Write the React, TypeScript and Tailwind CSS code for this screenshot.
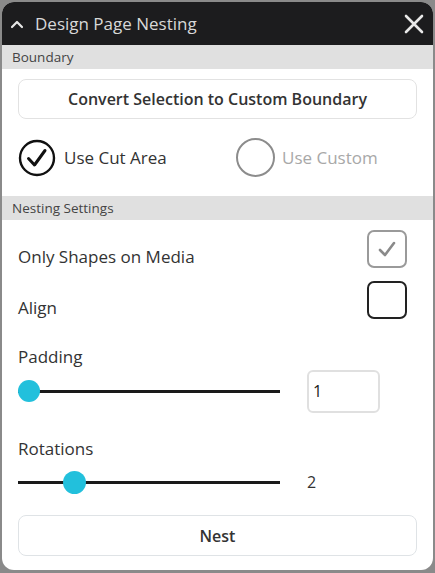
export default function App() {
  return (
    <div className="w-[435px] h-[573px] bg-[#8a8a8a] p-[2px] font-['Open_Sans',sans-serif]">
      <div className="w-full h-[568px] bg-white rounded-[12px] overflow-hidden flex flex-col">
        {/* Header */}
        <div className="h-[43px] bg-[#1c1c1e] flex items-center pl-[7px] pr-[9px] shrink-0">
          <svg width="16" height="16" viewBox="0 0 16 16" className="mr-[10px]">
            <path d="M3 11 L8 6 L13 11" fill="none" stroke="#e6e6e6" strokeWidth="2.2" strokeLinecap="round" strokeLinejoin="round" />
          </svg>
          <span className="text-[#d8d8d8] text-[17px] flex-1">Design Page Nesting</span>
          <svg width="20" height="20" viewBox="0 0 20 20">
            <path d="M2 2 L18 18 M18 2 L2 18" stroke="#e8e8e8" strokeWidth="2.6" strokeLinecap="round" />
          </svg>
        </div>

        {/* Boundary */}
        <div className="h-[24px] bg-[#e0e0e0] flex items-center px-[10px] text-[13.5px] text-[#444] shrink-0">Boundary</div>
        <div className="px-[16px] pt-[10px]">
          <button className="w-full h-[40px] rounded-[8px] border border-[#e2e2e2] text-[16px] font-semibold text-[#333]">
            Convert Selection to Custom Boundary
          </button>
          <div className="flex items-center h-[77px]">
            <div className="flex items-center w-[218px]">
              <svg width="38" height="38" viewBox="0 0 38 38">
                <circle cx="19" cy="19" r="17" fill="none" stroke="#111" strokeWidth="2.4" />
                <path d="M10.5 19.5 L16.5 26 L27 11.5" fill="none" stroke="#111" strokeWidth="3" strokeLinecap="round" strokeLinejoin="round" />
              </svg>
              <span className="ml-[8px] text-[17px] text-[#333]">Use Cut Area</span>
            </div>
            <div className="flex items-center">
              <svg width="39" height="39" viewBox="0 0 39 39">
                <circle cx="19.5" cy="19.5" r="18.5" fill="none" stroke="#8c8c8c" strokeWidth="2" />
              </svg>
              <span className="ml-[7px] text-[17px] text-[#a8a8a8]">Use Custom</span>
            </div>
          </div>
        </div>

        {/* Nesting Settings */}
        <div className="h-[24px] bg-[#e0e0e0] flex items-center px-[10px] text-[13.5px] text-[#444] shrink-0">Nesting Settings</div>
        <div className="px-[16px] pt-[10px]">
          <div className="flex items-start justify-between pr-[10px]">
            <span className="mt-[14px] text-[17px] leading-[25px] text-[#333]">Only Shapes on Media</span>
            <div className="w-[40px] h-[38px] rounded-[7px] border-2 border-[#9a9a9a] flex items-center justify-center">
              <svg width="24" height="24" viewBox="0 0 24 24">
                <path d="M5 13 L10 18 L19 6" fill="none" stroke="#8a8a8a" strokeWidth="2.6" strokeLinecap="round" strokeLinejoin="round" />
              </svg>
            </div>
          </div>
          <div className="flex items-start justify-between mt-[12px] pr-[10px]">
            <span className="mt-[14px] text-[17px] leading-[25px] text-[#333]">Align</span>
            <div className="w-[40px] h-[38px] rounded-[7px] border-2 border-[#222]" />
          </div>

          <div className="mt-[24px] text-[17px] leading-[25px] text-[#333]">Padding</div>
          <div className="flex items-center h-[44px]">
            <div className="relative w-[262px] h-[3px] bg-[#1a1a1a]">
              <div className="absolute left-0 top-[-10px] w-[22px] h-[22px] rounded-full bg-[#22c0dc]" />
            </div>
            <div className="ml-[27px] w-[73px] h-[43px] rounded-[6px] border-2 border-[#e0e0e0] flex items-center px-[4px] text-[16px] text-[#222]">1</div>
          </div>

          <div className="mt-[23px] text-[17px] leading-[25px] text-[#333]">Rotations</div>
          <div className="flex items-center h-[42px]">
            <div className="relative w-[262px] h-[3px] bg-[#1a1a1a]">
              <div className="absolute left-[45px] top-[-10px] w-[23px] h-[23px] rounded-full bg-[#22c0dc]" />
            </div>
            <span className="ml-[27px] text-[16px] text-[#333]">2</span>
          </div>

          <button className="mt-[12px] w-full h-[41px] rounded-[8px] border border-[#dfe3e6] text-[16px] font-semibold text-[#333]">
            Nest
          </button>
        </div>
      </div>
    </div>
  );
}
